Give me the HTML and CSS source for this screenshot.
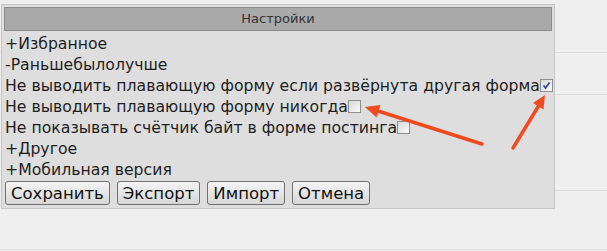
FILE: index.html
```html
<!DOCTYPE html>
<html lang="ru">
<head>
    <meta charset="UTF-8">
    <title>Настройки</title>
    <link rel="stylesheet" href="styles.css">
</head>
<body>
    <div class="page">
        <div class="row row1"></div>
        <div class="row row2"></div>
        <div class="row row3"></div>
        <div class="row row4"></div>
    </div>

    <div class="settings">
        <div class="settings_head">Настройки</div>
        <ul class="settings_list">
            <li>+Избранное</li>
            <li>-Раньшебылолучше</li>
            <li>Не выводить плавающую форму если развёрнута другая форма<span class="chk on"><svg width="11" height="11" viewBox="0 0 11 11"><path d="M2.5 5.5 L4.5 8 L8.5 2.5" fill="none" stroke="#3a4fa0" stroke-width="1.8"/></svg></span></li>
            <li>Не выводить плавающую форму никогда<span class="chk"></span></li>
            <li>Не показывать счётчик байт в форме постинга<span class="chk"></span></li>
            <li>+Другое</li>
            <li>+Мобильная версия</li>
        </ul>
        <div class="btns">
            <button class="btn">Сохранить</button>
            <button class="btn">Экспорт</button>
            <button class="btn">Импорт</button>
            <button class="btn">Отмена</button>
        </div>
    </div>

    <svg class="arrows" width="607" height="251">
        <line x1="482" y1="144" x2="378" y2="111" stroke="#f04a1e" stroke-width="3.5" stroke-linecap="round"/>
        <polygon points="365,107 380.5,105 376.5,117.5" fill="#f04a1e"/>
        <line x1="513" y1="148" x2="538.5" y2="106" stroke="#f04a1e" stroke-width="3.5" stroke-linecap="round"/>
        <polygon points="545,95 543.5,109.5 533,103" fill="#f04a1e"/>
    </svg>
</body>
</html>
```

FILE: styles.css
```css
*{
    margin: 0;
    padding: 0;
    list-style: none;
    box-sizing: border-box;
}
body{
    background: #efefef;
    font-family: "DejaVu Sans", Verdana, sans-serif;
    width: 607px;
    height: 251px;
    overflow: hidden;
    position: relative;
}
.row{
    border-bottom: 1px solid #dcdcdc;
}
.row1{
    height: 53px;
}
.row2{
    height: 42px;
}
.row3{
    height: 96px;
}
.row4{
    height: 59px;
}
.settings{
    position: absolute;
    left: 1px;
    top: 4px;
    width: 554px;
    height: 205px;
    background: #dedede;
    border: 1px solid #c6c6c6;
    padding: 2px;
}
.settings_head{
    height: 24px;
    line-height: 22px;
    background: #a9a9a9;
    border: 1px solid #8c8c8c;
    text-align: center;
    font-size: 13px;
    color: #333;
}
.settings_list{
    padding-top: 2px;
}
.settings_list li{
    height: 21px;
    line-height: 21px;
    font-size: 15.7px;
    color: #1e1e1e;
    padding-left: 1px;
    white-space: nowrap;
}
.chk{
    display: inline-block;
    width: 13px;
    height: 13px;
    border: 1px solid #8e8e8e;
    background: linear-gradient(135deg, #d8d8d8, #fbfbfb);
    vertical-align: -1px;
    position: relative;
}
.chk svg{
    position: absolute;
    left: 0;
    top: 0;
}
.btns{
    display: flex;
    gap: 7px;
    padding: 1px 0 0 1px;
}
.btn{
    height: 24px;
    padding: 0 5px;
    font-family: "DejaVu Sans", Verdana, sans-serif;
    font-size: 16.5px;
    color: #111;
    border: 1px solid #707070;
    border-radius: 3px;
    background: linear-gradient(#f4f4f4, #e6e6e6 50%, #d6d6d6);
}
.arrows{
    position: absolute;
    left: 0;
    top: 0;
}
```
